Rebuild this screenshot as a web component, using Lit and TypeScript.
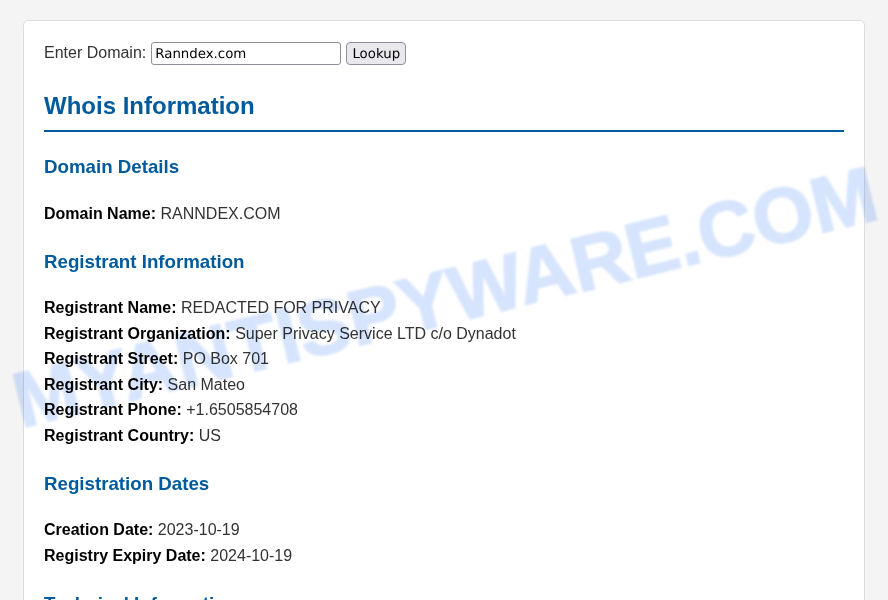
import { LitElement, html, css } from "lit";
import { customElement } from "lit/decorators.js";

const sections: { title: string; rows: [string, string][] }[] = [
  { title: "Domain Details", rows: [["Domain Name:", "RANNDEX.COM"]] },
  {
    title: "Registrant Information",
    rows: [
      ["Registrant Name:", "REDACTED FOR PRIVACY"],
      ["Registrant Organization:", "Super Privacy Service LTD c/o Dynadot"],
      ["Registrant Street:", "PO Box 701"],
      ["Registrant City:", "San Mateo"],
      ["Registrant Phone:", "+1.6505854708"],
      ["Registrant Country:", "US"],
    ],
  },
  {
    title: "Registration Dates",
    rows: [
      ["Creation Date:", "2023-10-19"],
      ["Registry Expiry Date:", "2024-10-19"],
    ],
  },
  { title: "Technical Information", rows: [] },
];

@customElement("app-root")
export class AppRoot extends LitElement {
  static styles = css`
    :host {
      display: block;
      height: 600px;
      overflow: hidden;
      position: relative;
      box-sizing: border-box;
      background: #f4f4f4;
      padding-top: 20px;
      font-family: "Liberation Sans", Arial, sans-serif;
      font-size: 16px;
      line-height: 25.6px;
      color: #333;
    }
    .card {
      box-sizing: border-box;
      width: 842px;
      margin: 0 auto;
      padding: 19px 20px 20px;
      background: #fff;
      border: 1px solid #ddd;
      border-radius: 5px;
    }
    form {
      display: flex;
      align-items: center;
      height: 26px;
    }
    label {
      margin-right: 5px;
    }
    input {
      box-sizing: border-box;
      width: 190px;
      height: 23px;
      margin: 0 5px 0 0;
      padding: 2px 3px 0;
      border: 1px solid #8f8f9d;
      border-radius: 3px;
      background: #fff;
      color: #000;
      font-family: "DejaVu Sans", sans-serif;
      font-size: 13.333px;
      text-rendering: geometricPrecision;
      outline: none;
    }
    button {
      box-sizing: border-box;
      width: 60px;
      height: 23px;
      margin: 0;
      padding: 2px 0 0;
      border: 1px solid #8f8f9d;
      border-radius: 4px;
      background: #e9e9ed;
      color: #000;
      font-family: "DejaVu Sans", sans-serif;
      font-size: 13.333px;
      text-rendering: geometricPrecision;
    }
    h1 {
      margin: 21px 0 0;
      padding-bottom: 5px;
      border-bottom: 2px solid #005a9c;
      color: #005a9c;
      font-size: 24px;
      line-height: 38.4px;
    }
    h2 {
      margin: 20px 0 0;
      color: #005a9c;
      font-size: 18.72px;
      line-height: 30px;
    }
    h2:last-of-type {
      margin-top: 21px;
    }
    .rows {
      margin-top: 18.52px;
    }
    .rows.empty {
      display: none;
    }
    .row b {
      color: #000;
    }
    .wm {
      position: absolute;
      left: 445px;
      top: 297px;
      transform: translate(-50%, -50%) rotate(-13.7deg);
      white-space: nowrap;
      font-size: 78px;
      line-height: 1;
      font-weight: 700;
      color: #d6e4fd;
      -webkit-text-stroke: 1.5px #d6e4fd;
      filter: blur(1px);
      pointer-events: none;
      mix-blend-mode: multiply;
    }
  `;

  render() {
    return html`
      <div class="card">
        <form @submit=${(e: Event) => e.preventDefault()}>
          <label>Enter Domain:</label>
          <input type="text" value="Ranndex.com" />
          <button type="submit">Lookup</button>
        </form>
        <h1>Whois Information</h1>
        ${sections.map(
          (s) => html`
            <h2>${s.title}</h2>
            <div class="rows ${s.rows.length ? "" : "empty"}">
              ${s.rows.map(
                ([k, v]) => html`<div class="row"><b>${k}</b> ${v}</div>`
              )}
            </div>
          `
        )}
      </div>
      <div class="wm">MYANTISPYWARE.COM</div>
    `;
  }
}
